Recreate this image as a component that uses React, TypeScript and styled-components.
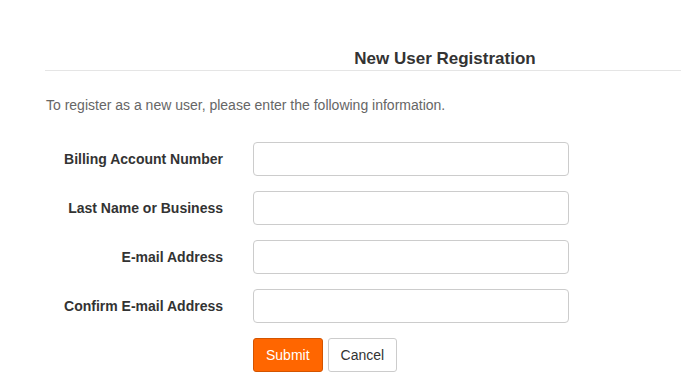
import React from "react";
import styled, {createGlobalStyle} from "styled-components";

const GlobalStyle = createGlobalStyle`
  html, body {
    margin: 0;
    padding: 0;
    background: #fff;
    overflow: hidden;
  }
  body {
    font-family: "Liberation Sans", Arial, sans-serif;
    color: #333;
  }
`;

const fields = [
  "Billing Account Number",
  "Last Name or Business",
  "E-mail Address",
  "Confirm E-mail Address",
];

export default function App() {
  return (
    <>
      <GlobalStyle />
      <Page>
        <Header>
          <Title>New User Registration</Title>
        </Header>
        <Intro>To register as a new user, please enter the following information.</Intro>
        <Form onSubmit={(e) => e.preventDefault()}>
          {fields.map((f) => (
            <Row key={f}>
              <Label>{f}</Label>
              <Input type='text' />
            </Row>
          ))}
          <Row>
            <span />
            <Actions>
              <Button $primary type='submit'>Submit</Button>
              <Button type='button'>Cancel</Button>
            </Actions>
          </Row>
        </Form>
      </Page>
    </>
  );
}

const Page = styled.div`
  margin-left: 45px;
  padding-top: 49px;
`;
const Header = styled.div`
  border-bottom: 1px solid #e5e5e5;
  padding: 0 0 1px 164px;
  text-align: center;
`;
const Title = styled.h1`
  margin: 0;
  font-size: 17px;
  font-weight: bold;
  line-height: 20px;
  color: #333;
`;
const Intro = styled.p`
  margin: 24px 0 27px 1px;
  font-size: 14px;
  line-height: 20px;
  color: #666;
`;
const Form = styled.form`
  display: grid;
  row-gap: 15px;
`;
const Row = styled.div`
  display: grid;
  grid-template-columns: 178px 316px;
  column-gap: 30px;
  align-items: center;
`;
const Label = styled.label`
  text-align: right;
  font-size: 14px;
  font-weight: bold;
  color: #333;
`;
const Input = styled.input`
  box-sizing: border-box;
  height: 34px;
  width: 100%;
  border: 1px solid #ccc;
  border-radius: 4px;
  padding: 6px 12px;
  font: inherit;
  font-size: 14px;
  outline: none;
`;
const Actions = styled.div`
  display: flex;
  gap: 5px;
`;
const Button = styled.button<{$primary?: boolean}>`
  box-sizing: border-box;
  height: 34px;
  padding: 0 12px;
  border-radius: 3px;
  font-family: "Liberation Sans", Arial, sans-serif;
  font-size: 14px;
  cursor: pointer;
  border: 1px solid ${(p) => (p.$primary ? "#d35400" : "#ccc")};
  background: ${(p) => (p.$primary ? "#ff6600" : "#fff")};
  color: ${(p) => (p.$primary ? "#fff" : "#333")};
`;
